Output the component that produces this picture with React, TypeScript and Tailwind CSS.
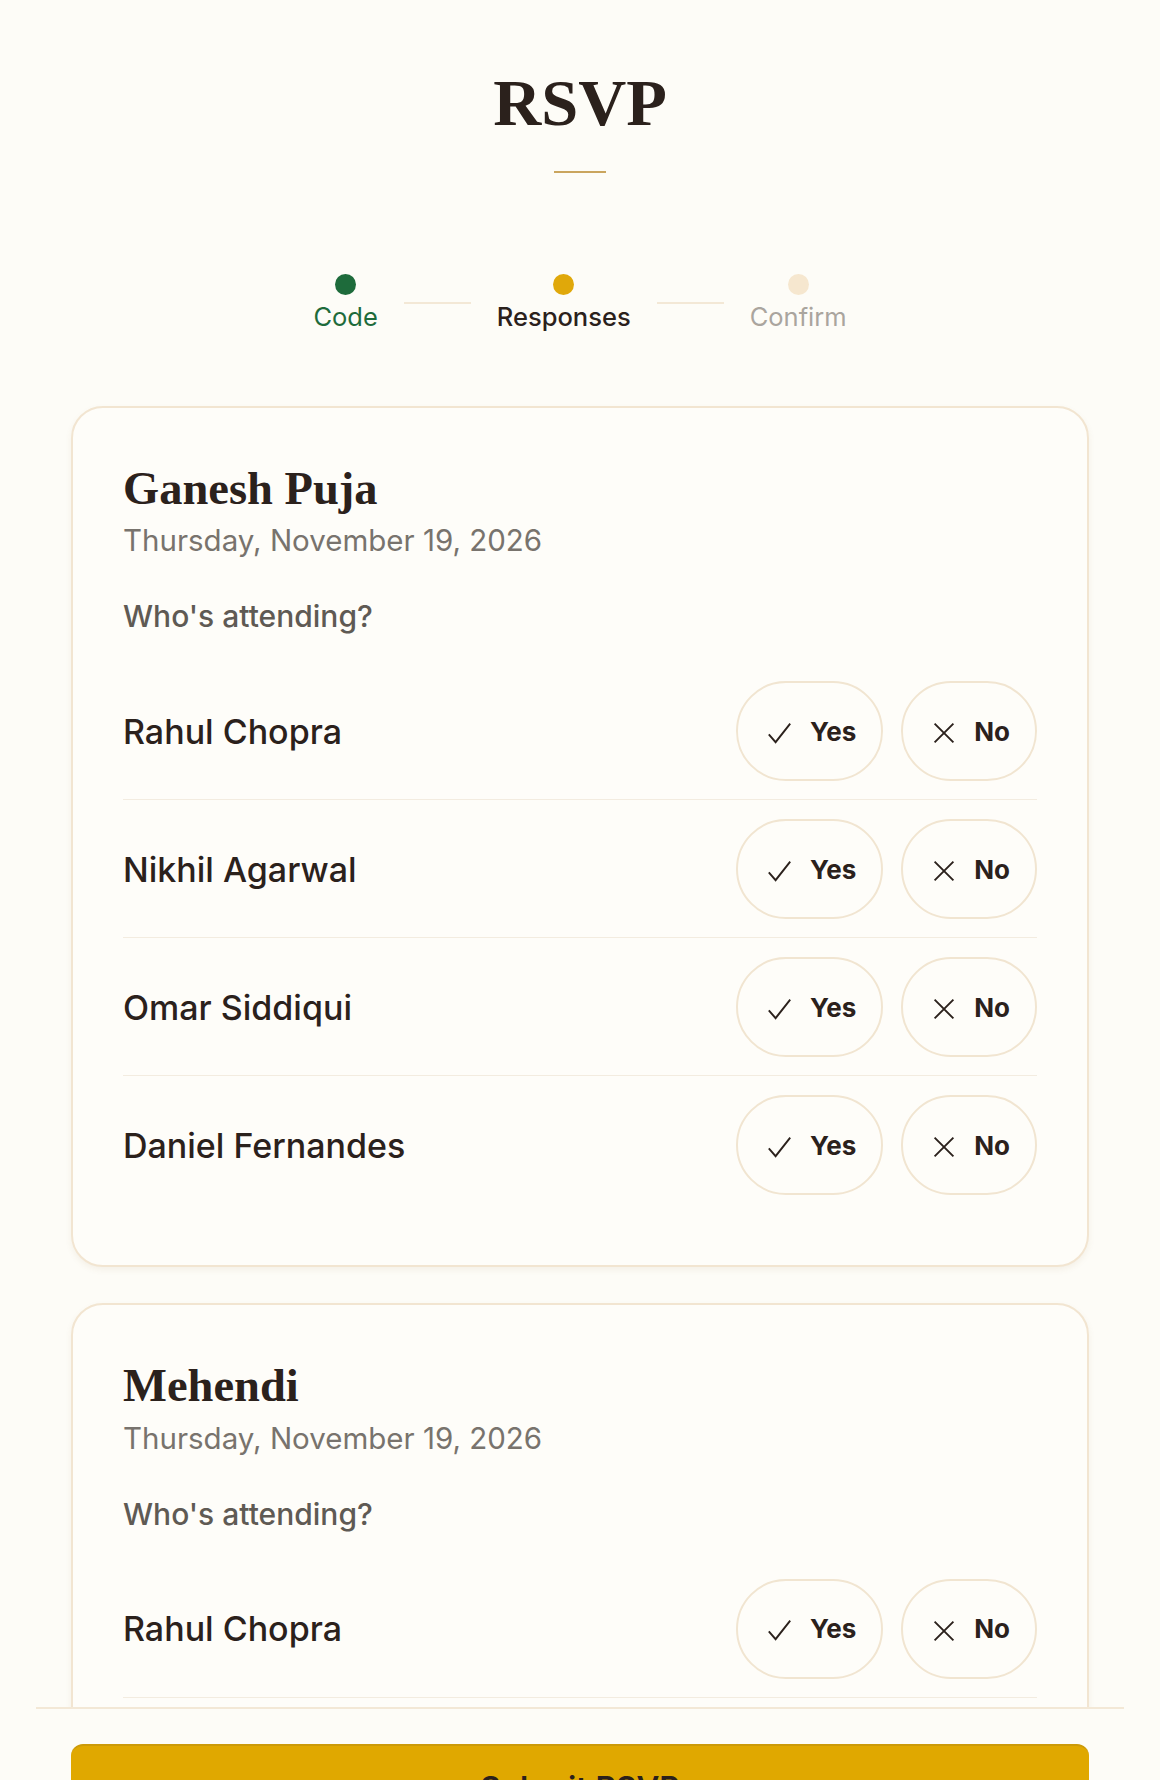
import React from "react";

const guests = ["Rahul Chopra", "Nikhil Agarwal", "Omar Siddiqui", "Daniel Fernandes"];

const events = [
  { name: "Ganesh Puja", date: "Thursday, November 19, 2026" },
  { name: "Mehendi", date: "Thursday, November 19, 2026" },
];

function CheckIcon() {
  return (
    <svg width="23" height="23" viewBox="0 0 23 23" fill="none" className="mt-[4px]">
      <path d="M0.8 12.4 7.6 20.2 22.2 1.6" stroke="#2b211c" strokeWidth="1.9" />
    </svg>
  );
}

function XIcon() {
  return (
    <svg width="22" height="22" viewBox="0 0 22 22" fill="none" className="mt-[4px]">
      <path d="M1.6 1.6 20.4 20.4M20.4 1.6 1.6 20.4" stroke="#2b211c" strokeWidth="1.9" />
    </svg>
  );
}

function Step({ label, dot, text }: { label: string; dot: string; text: string }) {
  return (
    <div className="flex flex-col items-center">
      <div className={`w-[21px] h-[21px] rounded-full ${dot}`} />
      <span className={`mt-[7px] text-[25.5px] leading-[30px] ${text}`}>{label}</span>
    </div>
  );
}

function GuestRow({ name }: { name: string }) {
  return (
    <div className="flex items-center justify-between pt-[19px] pb-[18px] border-b border-[#f3ece0] last:border-b-0">
      <span className="text-[34px] font-medium text-[#2b211c]">{name}</span>
      <div className="flex gap-[18px]">
        <button className="h-[100px] rounded-full border-2 border-[#f1e5d1] pl-[30px] pr-[25px] flex items-center gap-[19px] text-[26px] font-bold text-[#2b211c]">
          <CheckIcon />
          Yes
        </button>
        <button className="h-[100px] rounded-full border-2 border-[#f1e5d1] pl-[30px] pr-[25px] flex items-center gap-[19px] text-[26px] font-bold text-[#2b211c]">
          <XIcon />
          No
        </button>
      </div>
    </div>
  );
}

function EventCard({ name, date }: { name: string; date: string }) {
  return (
    <section className="rounded-[32px] border-2 border-[#f2e5d1] bg-[#fefdf9] px-[50px] pt-[58px] pb-[52px] shadow-[0_3px_6px_rgba(140,105,50,0.08)]">
      <h2 className="font-['Liberation_Serif',serif] font-bold text-[46.5px] leading-none text-[#2b211c]">{name}</h2>
      <p className="mt-[10px] text-[29.5px] leading-[36px] text-[#78736d]">{date}</p>
      <p className="mt-[40px] text-[30px] leading-[36px] font-medium text-[#5f5a54]">Who's attending?</p>
      <div className="mt-[28px]">
        {guests.map((g) => (
          <GuestRow key={g} name={g} />
        ))}
      </div>
    </section>
  );
}

export default function App() {
  return (
    <div className="h-[1780px] overflow-hidden bg-[#fdfcf7] font-['Inter',sans-serif] text-[#2b211c] flex flex-col">
      <div className="h-[1707px] shrink-0 overflow-hidden px-[71px]">
        <header className="pt-[70px] flex flex-col items-center">
          <h1 className="font-['Liberation_Serif',serif] font-bold text-[66.5px] leading-none">RSVP</h1>
          <div className="mt-[34px] h-[2px] w-[52px] bg-[#caa55e]" />
        </header>

        {/* steps */}
        <div className="mt-[101px] flex items-center justify-center gap-[26px]">
          <Step label="Code" dot="bg-[#1e6b3b]" text="text-[#1e6b3b]" />
          <div className="mt-[1px] h-[2px] w-[67px] bg-[#f3e8d6]" />
          <Step label="Responses" dot="bg-[#e0a80a]" text="text-[#2b211c] font-medium" />
          <div className="mt-[1px] h-[2px] w-[67px] bg-[#f3e8d6]" />
          <Step label="Confirm" dot="bg-[#f6e7cf]" text="text-[#aaa59e]" />
        </div>

        <div className="mt-[74px] flex flex-col gap-[36px]">
          {events.map((e) => (
            <EventCard key={e.name} name={e.name} date={e.date} />
          ))}
        </div>
      </div>

      <footer className="mx-[36px] border-t-2 border-[#f3e8d6] px-[35px] pt-[35px]">
        <button className="w-full rounded-[12px] border-t-2 border-[#cc9a08] bg-[#e0a800] pt-[18px] pb-[17px] text-[31.5px] leading-[47px] font-semibold text-[#2b211c]">
          Submit RSVP
        </button>
      </footer>
    </div>
  );
}
